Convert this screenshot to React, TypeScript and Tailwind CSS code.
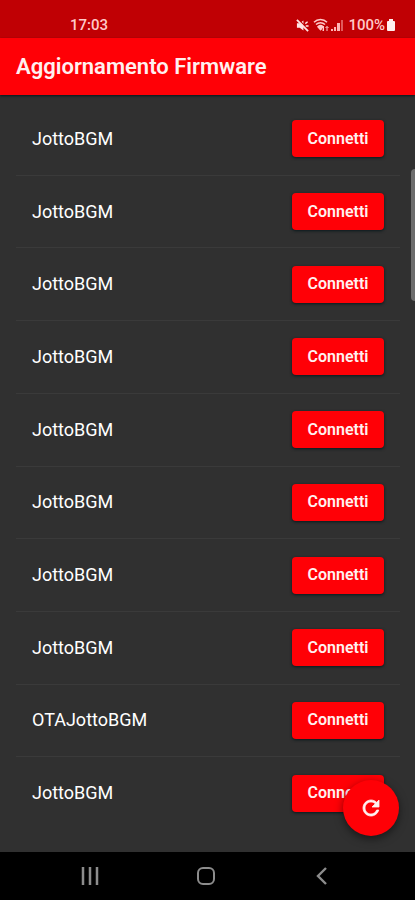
const devices = [
  "JottoBGM",
  "JottoBGM",
  "JottoBGM",
  "JottoBGM",
  "JottoBGM",
  "JottoBGM",
  "JottoBGM",
  "JottoBGM",
  "OTAJottoBGM",
  "JottoBGM",
];

function StatusBar() {
  return (
    <div className="flex h-[38px] shrink-0 items-end justify-between bg-[#c00004] pr-[19px] pb-[3px] pl-[70px] text-[15px] leading-5 font-medium text-[#ffc9c9]">
      <span>17:03</span>
      <div className="flex items-center">
        <svg className="mr-1 size-[13px]" viewBox="0 0 14 14" fill="none" stroke="#ffe4e4" aria-hidden="true">
          <path d="M1 4.500h3L8 1.500v11L4 9.500H1z" fill="#ffe4e4" stroke="none" />
          <path d="M2.500 0.500L14 12" stroke="#c00004" strokeWidth="1.500" />
          <path d="M1 1l12 12" strokeWidth="2" />
          <path d="M10 5l2.500-2M10.500 7.500h3" strokeWidth="1.500" />
        </svg>
        <svg className="mr-[2px] h-[14px] w-4" viewBox="0 0 16 14" fill="none" stroke="#ffc9c9" strokeWidth="1.500" aria-hidden="true">
          <path d="M1 4.200C4.500 0.500 10.500 0.500 14 4.200" />
          <path d="M3 6.500C5.500 4 9.500 4 12 6.500" />
          <path d="M5 8.700C6.500 7.300 8.500 7.300 10 8.700L7.500 11.500Z" fill="#ffc9c9" />
          <path d="M10.500 8v5M8.800 11.300l1.700 1.700M14 13V8.500M12.500 10l1.500-1.500 1.500 1.500" strokeWidth="1" />
        </svg>
        <svg className="mr-1 h-[14px] w-[13px]" viewBox="0 0 13 14" aria-hidden="true">
          <path d="M0 11h2v2H0zM3 9h2v4H3zM6 5h3v8H6z" fill="#ffb4b4" />
          <path d="M10 2h2v11h-2z" fill="#e05a5c" />
        </svg>
        <span>100%</span>
        <svg className="ml-px h-[14px] w-[10px]" viewBox="0 0 10 14" fill="#ffefef" aria-hidden="true">
          <path d="M3 1h4v2h1q1 0 1 1v8q0 1-1 1H2q-1 0-1-1V4q0-1 1-1h1z" />
        </svg>
      </div>
    </div>
  );
}

function DeviceRow({ name }: { name: string }) {
  return (
    <li className="flex flex-1 items-center justify-between border-b border-[#3a3a3a] px-4 last:border-transparent">
      <span className="text-[18px] leading-6 text-white">{name}</span>
      <button
        type="button"
        aria-label={`Connetti ${name}`}
        className="h-[37px] w-[92px] rounded bg-[#ff0006] text-[16px] leading-6 font-semibold text-[#fff0f0] shadow-[0_1px_3px_#08181c]"
      >
        Connetti
      </button>
    </li>
  );
}

function NavigationBar() {
  return (
    <nav className="flex h-12 shrink-0 items-center justify-around bg-black pr-[35px] pl-8">
      <button type="button" aria-label="App recenti" className="flex size-6 items-center justify-center">
        <svg className="size-[18px]" viewBox="0 0 18 18" fill="none" stroke="#8c8c8c" strokeWidth="2.500" aria-hidden="true">
          <path d="M2 0v18M9 0v18M16 0v18" />
        </svg>
      </button>
      <button type="button" aria-label="Home" className="flex size-6 items-center justify-center">
        <svg className="size-[18px]" viewBox="0 0 18 18" fill="none" stroke="#8c8c8c" strokeWidth="2" aria-hidden="true">
          <rect x="1" y="1" width="16" height="16" rx="5" />
        </svg>
      </button>
      <button type="button" aria-label="Indietro" className="flex size-6 items-center justify-center">
        <svg className="size-[18px]" viewBox="0 0 18 18" fill="none" stroke="#8c8c8c" strokeWidth="2.400" aria-hidden="true">
          <path d="M13 1L5 9l8 8" />
        </svg>
      </button>
    </nav>
  );
}

export default function App() {
  return (
    <div className="flex min-h-screen flex-col bg-[#303030] font-[Roboto,sans-serif]">
      <StatusBar />
      <header className="z-10 flex h-[57px] shrink-0 items-center bg-[#ff0006] px-4 shadow-[0_1px_2px_#06181c]">
        <h1 className="text-[22px] leading-7 font-semibold text-[#fff0f0]">Aggiornamento Firmware</h1>
      </header>
      <main className="relative flex flex-1 flex-col pt-2 pr-[15px] pb-[22px] pl-4">
        <ul className="flex flex-1 flex-col">
          {devices.map((name, index) => (
            <DeviceRow key={index} name={name} />
          ))}
        </ul>
        <div className="absolute top-[74px] right-0 h-[132px] w-1 rounded-l bg-[#6c6c6c]" />
        <button
          type="button"
          aria-label="Aggiorna"
          className="absolute right-4 bottom-4 flex size-14 items-center justify-center rounded-full bg-[#ff0006] shadow-[0_3px_8px_#00000080]"
        >
          <svg className="size-6" viewBox="0 0 24 24" fill="#fff0f0" stroke="#fff0f0" strokeWidth="0.800" aria-hidden="true">
            <path d="M17.650 6.350C16.200 4.900 14.210 4 12 4c-4.420 0-7.990 3.580-7.990 8s3.570 8 7.990 8c3.730 0 6.840-2.550 7.730-6h-2.080c-.820 2.330-3.040 4-5.650 4-3.310 0-6-2.690-6-6s2.690-6 6-6c1.660 0 3.140.690 4.220 1.780L13 11h7V4l-2.350 2.350z" />
          </svg>
        </button>
      </main>
      <NavigationBar />
    </div>
  );
}
